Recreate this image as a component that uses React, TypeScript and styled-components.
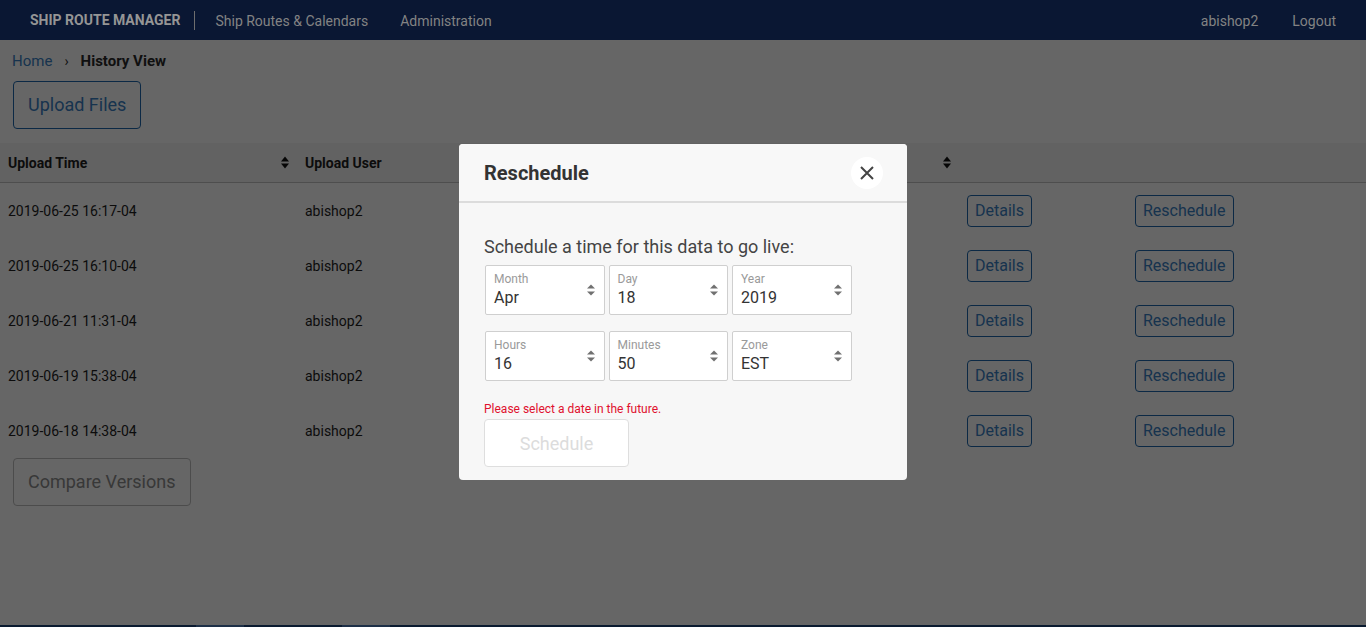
import React from "react";
import styled, { createGlobalStyle } from "styled-components";

const Global = createGlobalStyle`
  html, body { margin: 0; padding: 0; }
  body {
    font-family: Roboto, "Noto Sans", "Liberation Sans", sans-serif;
    background: #ffffff;
    color: #222;
  }
  * { box-sizing: border-box; }
`;

const Nav = styled.header`
  position: relative;
  z-index: 20;
  height: 40px;
  background: #0a1733;
  display: flex;
  align-items: center;
  padding: 1px 30px 0;
  font-size: 14px;
  color: #808080;
`;

const Brand = styled.span`
  font-weight: 700;
  font-size: 14px;
  color: #959595;
  padding-right: 14px;
  border-right: 1px solid #6e6e6e;
  line-height: 19px;
`;

const NavLink = styled.a<{ $gap?: number }>`
  color: #838383;
  text-decoration: none;
  margin-left: ${(p) => p.$gap ?? 0}px;
`;

const Spacer = styled.div`
  flex: 1;
`;

const Main = styled.main`
  min-height: 585px;
  padding-top: 12px;
`;

const Crumbs = styled.nav`
  display: flex;
  align-items: center;
  gap: 12px;
  padding-left: 12px;
  font-size: 15px;
  line-height: 18px;
`;

const CrumbLink = styled.a`
  color: #3a7fc4;
  text-decoration: none;
`;

const CrumbSep = styled.span`
  color: #333;
  font-size: 14px;
`;

const CrumbCurrent = styled.span`
  font-weight: 700;
  color: #2a2a2a;
`;

const OutlineButton = styled.button<{ $size?: "lg" | "sm"; $disabled?: boolean }>`
  font-family: inherit;
  background: transparent;
  border: 1px solid ${(p) => (p.$disabled ? "#bdbdbd" : "#1e66ad")};
  color: ${(p) => (p.$disabled ? "#8c8c8c" : "#3a7fc4")};
  border-radius: 4px;
  cursor: pointer;
  font-size: ${(p) => (p.$size === "sm" ? 16 : 18)}px;
  height: ${(p) => (p.$size === "sm" ? 32 : 48)}px;
  padding: 0 ${(p) => (p.$size === "sm" ? 7 : 14)}px;
  line-height: 1;
`;

const TopActions = styled.div`
  padding: 11px 0 14px 13px;
`;

const BottomActions = styled.div`
  padding: 0 0 0 13px;
`;

const Table = styled.div`
  display: grid;
  grid-template-columns: 297px 297px 365px 168px 1fr;
`;

const HeadCell = styled.div`
  height: 40px;
  background: #f6f6f6;
  border-bottom: 1px solid #c4c4c4;
  display: flex;
  align-items: center;
  justify-content: space-between;
  padding: 0 8px;
  font-size: 14px;
  font-weight: 700;
  color: #1e1e1e;
`;

const Cell = styled.div`
  height: 55px;
  display: flex;
  align-items: center;
  padding: 0 8px;
  font-size: 14px;
  color: #1e1e1e;
`;

const Footer = styled.footer`
  position: relative;
  z-index: 20;
  height: 40px;
  background: #0a1a30;
  display: flex;
  padding-left: 196px;
  gap: 98px;
`;

const FooterTab = styled.span`
  width: 48px;
  height: 40px;
  background: #1d2f47;
`;

const Overlay = styled.div`
  position: fixed;
  inset: 0;
  z-index: 10;
  background: rgba(0, 0, 0, 0.6);
  display: flex;
  justify-content: center;
  align-items: flex-start;
  padding-top: 144px;
`;

const Modal = styled.div`
  width: 448px;
  background: #f7f7f7;
  border-radius: 4px;
  overflow: hidden;
`;

const ModalHeader = styled.div`
  height: 59px;
  background: #f8f8f8;
  border-bottom: 2px solid #dcdcdc;
  display: flex;
  align-items: center;
  justify-content: space-between;
  padding: 0 24px 0 25px;
`;

const ModalTitle = styled.h2`
  margin: 0;
  font-size: 20px;
  font-weight: 700;
  color: #333;
`;

const CloseButton = styled.button`
  width: 32px;
  height: 32px;
  border-radius: 50%;
  border: none;
  background: #ffffff;
  display: flex;
  align-items: center;
  justify-content: center;
  padding: 0;
  cursor: pointer;
`;

const ModalBody = styled.div`
  padding: 33px 24px 13px 25px;
`;

const Prompt = styled.p`
  margin: 0 0 7px;
  font-size: 18px;
  line-height: 22px;
  color: #444;
`;

const FieldRow = styled.div`
  display: flex;
  gap: 4px;
  padding-left: 1px;
  margin-bottom: 16px;
`;

const Field = styled.div`
  width: 119.5px;
  height: 50px;
  background: #ffffff;
  border: 1px solid #cfcfcf;
  border-radius: 2px;
  display: flex;
  align-items: center;
  padding: 0 9px 0 8px;
`;

const FieldText = styled.div`
  flex: 1;
  display: flex;
  flex-direction: column;
`;

const FieldLabel = styled.span`
  font-size: 12px;
  line-height: 14px;
  color: #9a9a9a;
`;

const FieldValue = styled.span`
  font-size: 16px;
  line-height: 20px;
  color: #333;
  margin-top: 2px;
`;

const ErrorText = styled.div`
  margin-top: 21px;
  font-size: 12px;
  line-height: 14px;
  color: #e0112e;
`;

const ScheduleButton = styled.button`
  margin-top: 3px;
  width: 145px;
  height: 48px;
  background: #ffffff;
  border: 1px solid #dedede;
  border-radius: 4px;
  font-family: inherit;
  font-size: 18px;
  color: #dcdcdc;
`;

const SortIcon = ({ color = "#111" }: { color?: string }) => (
  <svg width="8" height="13" viewBox="0 0 8 13">
    <polygon points="0,5.5 4,0.5 8,5.5" fill={color} />
    <polygon points="0,7.5 4,12.5 8,7.5" fill={color} />
  </svg>
);

const SelectArrows = () => (
  <svg width="8" height="12" viewBox="0 0 8 12">
    <polygon points="0,4.5 4,0.5 8,4.5" fill="#707070" />
    <polygon points="0,7.5 4,11.5 8,7.5" fill="#707070" />
  </svg>
);

const CloseIcon = () => (
  <svg width="16" height="16" viewBox="0 0 16 16">
    <path d="M2 2 L14 14 M14 2 L2 14" stroke="#444" strokeWidth="2" />
  </svg>
);

const rows = [
  { time: "2019-06-25 16:17-04", user: "abishop2" },
  { time: "2019-06-25 16:10-04", user: "abishop2" },
  { time: "2019-06-21 11:31-04", user: "abishop2" },
  { time: "2019-06-19 15:38-04", user: "abishop2" },
  { time: "2019-06-18 14:38-04", user: "abishop2" },
];

const fields = [
  [
    { label: "Month", value: "Apr" },
    { label: "Day", value: "18" },
    { label: "Year", value: "2019" },
  ],
  [
    { label: "Hours", value: "16" },
    { label: "Minutes", value: "50" },
    { label: "Zone", value: "EST" },
  ],
];

export default function App() {
  return (
    <>
      <Global />
      <Nav>
        <Brand>SHIP ROUTE MANAGER</Brand>
        <NavLink $gap={20}>Ship Routes &amp; Calendars</NavLink>
        <NavLink $gap={32}>Administration</NavLink>
        <Spacer />
        <NavLink>abishop2</NavLink>
        <NavLink $gap={34}>Logout</NavLink>
      </Nav>
      <Main>
        <Crumbs>
          <CrumbLink>Home</CrumbLink>
          <CrumbSep>›</CrumbSep>
          <CrumbCurrent>History View</CrumbCurrent>
        </Crumbs>
        <TopActions>
          <OutlineButton>Upload Files</OutlineButton>
        </TopActions>
        <Table>
          <HeadCell>
            Upload Time <SortIcon />
          </HeadCell>
          <HeadCell>Upload User</HeadCell>
          <HeadCell>
            <span />
            <SortIcon />
          </HeadCell>
          <HeadCell />
          <HeadCell />
          {rows.map((r, i) => (
            <React.Fragment key={i}>
              <Cell>{r.time}</Cell>
              <Cell>{r.user}</Cell>
              <Cell />
              <Cell>
                <OutlineButton $size="sm">Details</OutlineButton>
              </Cell>
              <Cell>
                <OutlineButton $size="sm">Reschedule</OutlineButton>
              </Cell>
            </React.Fragment>
          ))}
        </Table>
        <BottomActions>
          <OutlineButton $disabled>Compare Versions</OutlineButton>
        </BottomActions>
      </Main>
      <Footer>
        <FooterTab />
        <FooterTab />
      </Footer>
      <Overlay>
        <Modal>
          <ModalHeader>
            <ModalTitle>Reschedule</ModalTitle>
            <CloseButton aria-label="Close">
              <CloseIcon />
            </CloseButton>
          </ModalHeader>
          <ModalBody>
            <Prompt>Schedule a time for this data to go live:</Prompt>
            {fields.map((row, i) => (
              <FieldRow key={i}>
                {row.map((f) => (
                  <Field key={f.label}>
                    <FieldText>
                      <FieldLabel>{f.label}</FieldLabel>
                      <FieldValue>{f.value}</FieldValue>
                    </FieldText>
                    <SelectArrows />
                  </Field>
                ))}
              </FieldRow>
            ))}
            <ErrorText>Please select a date in the future.</ErrorText>
            <ScheduleButton disabled>Schedule</ScheduleButton>
          </ModalBody>
        </Modal>
      </Overlay>
    </>
  );
}
